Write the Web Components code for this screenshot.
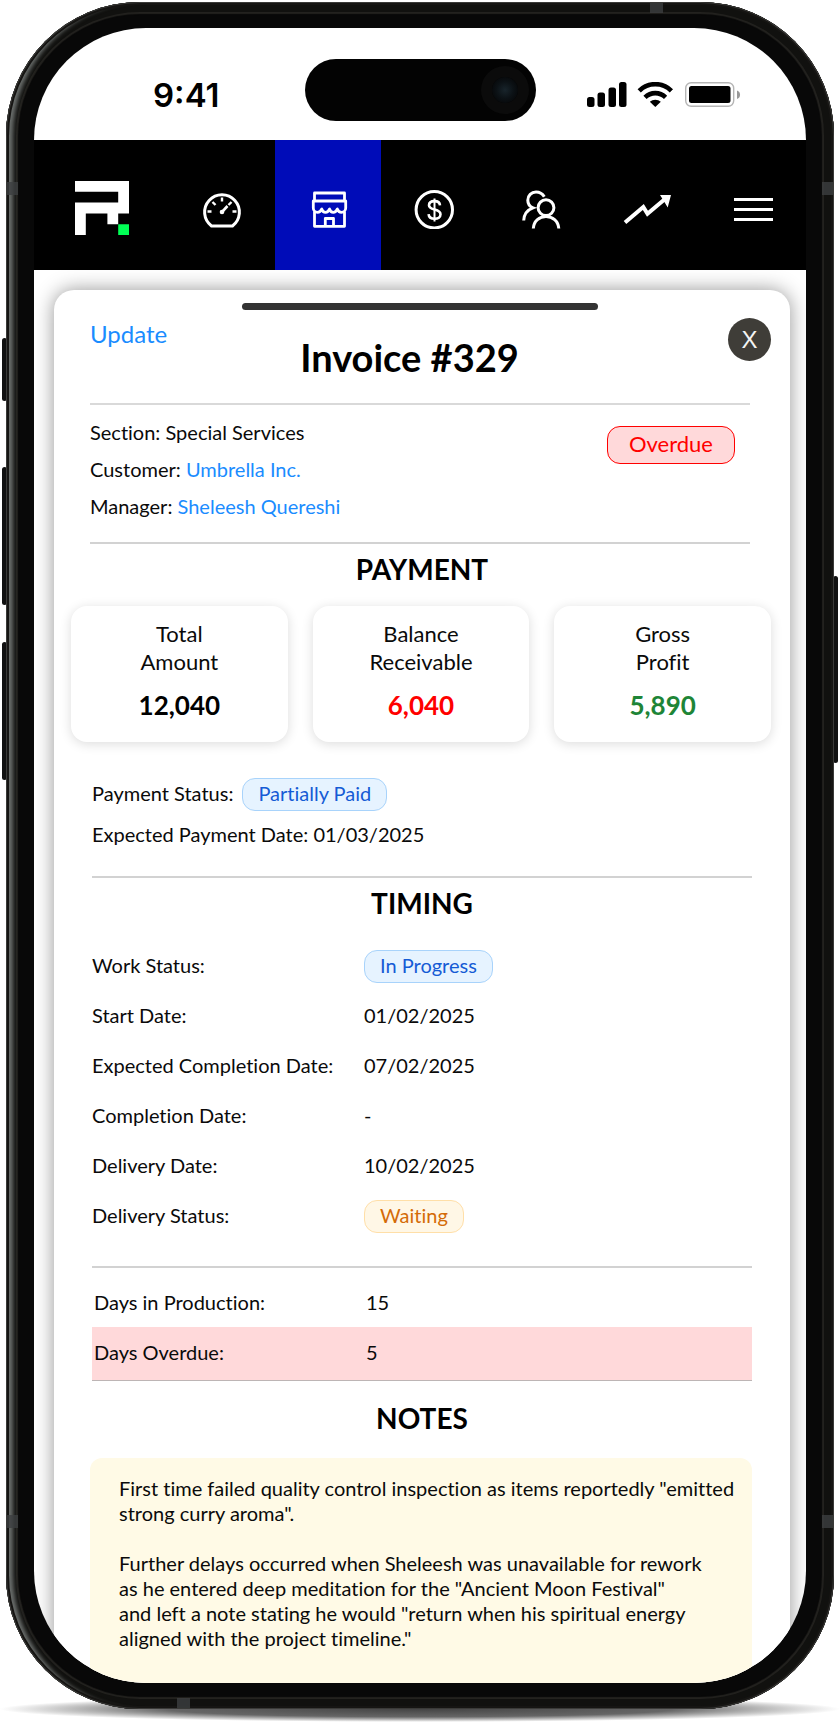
<!DOCTYPE html>
<html lang="en">
<head>
<meta charset="utf-8">
<meta name="viewport" content="width=device-width, initial-scale=1">
<title>Invoice #329</title>
<style>
  body { margin: 0; background: #fff; color: #0a0a0a; font: 20px/28px Lato, "Liberation Sans", sans-serif; font-variant-ligatures: none; }
  a { color: #1a8cff; text-decoration: none; }
</style>
</head>
<body>
<phone-frame>
  <status-bar></status-bar>
  <nav-bar>
    <nav-item label="Dashboard"><svg viewBox="0 0 48 48" width="48" height="48" fill="none" stroke="#fff" stroke-width="3"><path d="M13.5 45 A17.4 17.4 0 1 1 34.5 45 Z" stroke-linejoin="round"/><path d="M24 16.5v4M9.5 30.5h4M34.5 30.5h4M14.5 21l3 3M33.5 21l-3 3" stroke-width="2.4"/><path d="M24 31l5.5-6" stroke-width="2.6"/><circle cx="24" cy="31" r="2.3" fill="#fff" stroke="none"/></svg></nav-item>
    <nav-item label="Store" active><svg viewBox="0 0 48 48" width="48" height="48" fill="none" stroke="#fff" stroke-width="2.8" stroke-linejoin="round"><path d="M10.5 20V12h30v8M9.3 20h32.4v7c0 2.5-2 4.3-4.2 4.3-2 0-3.6-1.5-4.2-3.3-.8 2-2.200 3.300-4 3.300s-3.200-1.300-3.800-3.300c-.8 2-2.200 3.300-4 3.300s-3.200-1.300-3.800-3.300c-.8 2-2.200 3.300-4.200 3.300-2.400 0-4.200-1.800-4.200-4.300z"/><path d="M10.500 30.500V45.300h30V30.500M21.300 45.300V37.500h8.200v7.800"/></svg></nav-item>
    <nav-item label="Finance"><svg viewBox="0 0 48 48" width="48" height="48" fill="none" stroke="#fff" stroke-width="3"><circle cx="24.300" cy="28.700" r="18.200"/><path d="M30 24.300c-.2-2.700-2.500-4.200-5.500-4.200-3.200 0-5.500 1.600-5.500 4.200 0 5.600 11.500 3 11.500 9 0 2.800-2.500 4.500-5.800 4.500-3.400 0-5.900-1.700-6.100-4.700" stroke-width="2.600"/><path d="M24.500 17.500v23" stroke-width="2"/></svg></nav-item>
    <nav-item label="Customers"><svg viewBox="0 0 48 48" width="48" height="48" fill="none" stroke="#fff" stroke-width="3"><circle cx="29" cy="26.700" r="7.900"/><path d="M16.300 47.500C16.800 40 22.500 35.600 29 35.600S41.200 40 41.800 47.500M27.300 15.800C25.500 12.700 22.500 11 19 11c-4.600 0-8.200 3.600-8.200 8.200 0 3.400 1.700 6.200 5.200 7.600C10.500 28.800 7 33 6.700 39.500"/></svg></nav-item>
    <nav-item label="Reports"><svg viewBox="0 0 48 48" width="48" height="48" fill="none" stroke="#fff" stroke-width="4"><path d="M2 41.500 20.300 26l4.200 6.800L42 18"/><path d="M37 14h11l-3.300 12.500-3-5z" fill="#fff" stroke="none"/></svg></nav-item>
    <nav-item label="Menu"><svg viewBox="0 0 48 48" width="48" height="48" fill="#fff"><path d="M5 17h39v3H5zM5 27h39v3H5zM5 37h39v3H5z"/></svg></nav-item>
  </nav-bar>
  <invoice-sheet>
    <sheet-header>
      <a slot="action" href="#update">Update</a>
      Invoice #329
    </sheet-header>
    <sheet-section ruled lead>
      <party-info>
        <span>Section: Special Services</span>
        <span>Customer: <a href="#customer">Umbrella Inc.</a></span>
        <span>Manager: <a href="#manager">Sheleesh Quereshi</a></span>
        <status-pill slot="status" tone="danger" large>Overdue</status-pill>
      </party-info>
    </sheet-section>
    <sheet-section ruled heading="PAYMENT">
      <stat-row slot="wide">
        <stat-card value="12,040">Total<br>Amount</stat-card>
        <stat-card value="6,040" tone="danger">Balance<br>Receivable</stat-card>
        <stat-card value="5,890" tone="success">Gross<br>Profit</stat-card>
      </stat-row>
      <payment-info>
        <span slot="status">Payment Status:</span>
        <status-pill slot="status" tone="info">Partially Paid</status-pill>
        Expected Payment Date: 01/03/2025
      </payment-info>
    </sheet-section>
    <sheet-section ruled heading="TIMING">
      <detail-list>
        <detail-row label="Work Status:"><status-pill tone="info">In Progress</status-pill></detail-row>
        <detail-row label="Start Date:">01/02/2025</detail-row>
        <detail-row label="Expected Completion Date:">07/02/2025</detail-row>
        <detail-row label="Completion Date:">-</detail-row>
        <detail-row label="Delivery Date:">10/02/2025</detail-row>
        <detail-row label="Delivery Status:"><status-pill tone="warning">Waiting</status-pill></detail-row>
      </detail-list>
    </sheet-section>
    <sheet-section ruled>
      <detail-list compact>
        <detail-row label="Days in Production:" inset>15</detail-row>
        <detail-row label="Days Overdue:" inset alert>5</detail-row>
      </detail-list>
    </sheet-section>
    <sheet-section heading="NOTES" roomy>
      <note-box slot="wide">First time failed quality control inspection as items reportedly "emitted strong curry aroma".<br><br>Further delays occurred when Sheleesh was unavailable for rework<br>as he entered deep meditation for the "Ancient Moon Festival"<br>and left a note stating he would "return when his spiritual energy<br>aligned with the project timeline."</note-box>
    </sheet-section>
  </invoice-sheet>
</phone-frame>

<script>
const define = (name, html, setup) => {
  const template = document.createElement('template');
  template.innerHTML = html;
  customElements.define(name, class extends HTMLElement {
    constructor() {
      super();
      this.attachShadow({ mode: 'open' }).append(template.content.cloneNode(true));
    }
    connectedCallback() { if (setup) setup(this, this.shadowRoot); }
  });
};

define('phone-frame', `
<style>
  :host { display: block; position: relative; padding: 2px 6px 13px; overflow: hidden; }
  .ground { position: absolute; left: 0; right: 0; bottom: 0; height: 26px; background: radial-gradient(closest-side, #444 0, #666 60%, #bbb 82%, transparent 100%); }
  .body { position: relative; padding: 26px 28px; border-radius: 134px; background: #080808;
    box-shadow: inset 0 0 0 1px #3a3a38, inset 0 0 0 3px #161513, inset 9px 0 4px -2px #6a6e6c, inset 0 0 0 10px #11110f, inset 0 0 1px 12px #23221f; }
  .screen { overflow: hidden; border-radius: 112px; background: #fff; }
  .key { position: absolute; width: 5px; border-radius: 3px; background: #111; }
  .left { left: 2px; } .right { right: 2px; }
  .band { position: absolute; background: #3c3e40; opacity: .8; }
  .v { width: 11px; height: 13px; } .h { width: 13px; height: 10px; }
</style>
<div class="ground"></div>
<i class="key left" style="top:338px;height:63px"></i>
<i class="key left" style="top:467px;height:138px"></i>
<i class="key left" style="top:642px;height:138px"></i>
<i class="key right" style="top:576px;height:187px"></i>
<div class="body">
  <i class="band v" style="left:1px;top:180px"></i><i class="band v" style="right:1px;top:180px"></i>
  <i class="band v" style="left:1px;bottom:181px"></i><i class="band v" style="right:1px;bottom:181px"></i>
  <i class="band h" style="top:1px;right:171px"></i><i class="band h" style="bottom:1px;left:171px"></i>
  <div class="screen"><slot></slot></div>
</div>`);

define('status-bar', `
<style>
  :host { display: grid; grid-template-columns: 1fr 231px 1fr; align-items: center; height: 112px; padding-top: 0; color: #000; }
  time { padding: 22px 0 0 119px; font: 600 33px/40px Inter, sans-serif; }
  .island { height: 62px; margin-top: 12px; border-radius: 31px; background: #030303; display: flex; align-items: center; justify-content: flex-end; }
  .lens { width: 26px; height: 26px; margin-right: 18px; border-radius: 50%; background: radial-gradient(circle, #18242b 0, #0c1216 45%, #07090b 75%); box-shadow: 0 0 0 11px #0b0b0b; }
  .icons { justify-self: end; margin-right: 65px; padding-top: 22px; }
  svg { display: block; }
</style>
<time>9:41</time>
<div class="island"><span class="lens"></span></div>
<div class="icons"><svg width="154" height="26" viewBox="0 0 154 26">
  <g><rect x="0" y="15" width="7.500" height="10" rx="2.500"/><rect x="10.500" y="10.500" width="7.500" height="14.500" rx="2.500"/><rect x="21.500" y="5.500" width="7.500" height="19.500" rx="2.500"/><rect x="32" y="0" width="7.500" height="25" rx="2.500"/></g>
  <g fill="none" stroke="#000" stroke-width="4.600"><path d="M52.200 8.800a22.800 22.800 0 0 1 32.200 0"/><path d="M58 15.300a14.800 14.800 0 0 1 20.600 0"/></g>
  <path d="M62.800 19.800a8.300 8.300 0 0 1 11 0L68.300 25z"/>
  <rect x="98.700" y=".7" width="48" height="23.600" rx="5.500" fill="#fff" stroke="#b5b5b5" stroke-width="1.400"/>
  <rect x="102" y="4" width="41.500" height="17" rx="2.500"/>
  <path d="M150 8.500a4.500 4.500 0 0 1 0 8.500z" fill="#999"/>
</svg></div>`);

define('nav-bar', `
<style>
  :host { display: block; background: #000; }
  nav { display: flex; height: 130px; }
  .logo { flex: 0 0 135px; display: flex; align-items: center; justify-content: center; }
  ::slotted(*) { flex: 1; }
  svg { margin-top: 6px; }
</style>
<nav aria-label="Main">
  <a class="logo" href="#home" aria-label="Home"><svg width="54" height="54" viewBox="0 0 5 5"><path fill="#fff" d="M0 0h5v3H4v1H3V3H1v2H0V2h4V1H0z"/><path fill="#00ff55" d="M4 4h1v1H4z"/></svg></a>
  <slot></slot>
</nav>`);

define('nav-item', `
<style>
  :host { display: flex; }
  :host([active]) { background: #000cb8; }
  a { flex: 1; display: flex; align-items: center; justify-content: center; }
</style>
<a href="#"><slot></slot></a>`, (host, root) => {
  const link = root.querySelector('a');
  link.setAttribute('aria-label', host.getAttribute('label'));
  if (host.hasAttribute('active')) link.setAttribute('aria-current', 'page');
});

define('invoice-sheet', `
<style>
  :host { display: block; padding: 20px 16px 0 20px; }
  main { display: block; padding-top: 13px; border-radius: 20px 20px 0 0; background: #fff; box-shadow: 0 0 20px rgba(0, 0, 0, .42); }
  .top { padding: 0 40px 0 36px; }
  .grip { width: 54%; height: 7px; margin: 0 auto; border-radius: 4px; background: #333; }
</style>
<main><div class="top"><div class="grip"></div></div><slot></slot></main>`);

define('sheet-header', `
<style>
  :host { display: block; padding-top: 8px; }
  header { display: grid; grid-template-columns: 5fr auto 6fr; align-items: start; padding: 0 19px 0 36px; }
  ::slotted(a) { font-size: 24px; line-height: 32px; }
  h1 { margin: 17px 0 24px; font-size: 38px; line-height: 44px; font-weight: 700; color: #000; }
  button { justify-self: end; width: 43px; height: 43px; padding: 0; border: 0; border-radius: 50%; background: #3f3d38; color: #f4f4f4; font: 24px/43px "Liberation Sans", sans-serif; }
  hr { height: 2px; margin: 0 40px 0 36px; border: 0; background: #d9d9d9; }
</style>
<header><slot name="action"></slot><h1><slot></slot></h1><button type="button" aria-label="Close">X</button></header>
<hr>`);

define('sheet-section', `
<style>
  :host { display: block; --left: 38px; --right: 38px; }
  :host([lead]) { --left: 36px; --right: 40px; }
  h2 { margin: 0; padding: 7px 0 19px; text-align: center; font-size: 28px; line-height: 36px; font-weight: 700; color: #000; }
  :host([roomy]) h2 { padding: 19px 0 22px; }
  .content { padding: 0 var(--right) 0 var(--left); }
  hr { display: none; height: 2px; margin: 0 var(--right) 0 var(--left); border: 0; background: #d2d2d2; }
  :host([ruled]) hr { display: block; }
</style>
<h2></h2><slot name="wide"></slot><div class="content"><slot></slot></div><hr>`, (host, root) => {
  const title = root.querySelector('h2');
  if (host.hasAttribute('heading')) title.textContent = host.getAttribute('heading');
  else title.remove();
  if (host.querySelector('[alert]')) root.querySelector('hr').style.cssText = 'height:1px;background:#bdb5b5';
});

define('party-info', `
<style>
  :host { display: flex; justify-content: space-between; align-items: flex-start; padding: 9px 15px 17px 0; line-height: 37px; }
  .lines { display: flex; flex-direction: column; }
  .status { padding-top: 12px; }
</style>
<div class="lines"><slot></slot></div><div class="status"><slot name="status"></slot></div>`);

define('status-pill', `
<style>
  :host { display: inline-block; padding: 0 15px 3px; border: 1px solid; border-radius: 13px; font-size: 20px; line-height: 28px; }
  :host([large]) { padding: 0 21px 3px; font-size: 22px; line-height: 33px; }
  :host([tone=info]) { color: #155bd5; background: #e6f3ff; border-color: #a8d3fb; }
  :host([tone=warning]) { color: #d46b08; background: #fff7e6; border-color: #ffdfa8; }
  :host([tone=danger]) { color: #f00; background: #ffd9da; border-color: #f00; }
</style>
<slot></slot>`);

define('stat-row', `
<style>:host { display: grid; grid-template-columns: repeat(3, 1fr); gap: 25px; margin: 0 19px 0 17px; }</style>
<slot></slot>`);

define('stat-card', `
<style>
  :host { display: block; padding: 14px 0 21px; border-radius: 16px; background: #fff; text-align: center; font-size: 22px; box-shadow: 0 2px 12px rgba(0, 0, 0, .14); }
  strong { display: block; margin-top: 13px; font-size: 26px; line-height: 32px; color: #000; }
  :host([tone=danger]) strong { color: #f00; }
  :host([tone=success]) strong { color: #1e8537; }
</style>
<slot></slot><strong></strong>`, (host, root) => {
  root.querySelector('strong').textContent = host.getAttribute('value');
});

define('payment-info', `
<style>
  :host { display: block; padding: 36px 0 23px; line-height: 37px; }
  .status { display: flex; align-items: baseline; gap: 9px; margin-bottom: 5px; line-height: 28px; }
</style>
<div class="status"><slot name="status"></slot></div><slot></slot>`);

define('detail-list', `
<style>
  :host { display: block; padding-bottom: 26px; }
  :host([compact]) { padding: 9px 0 0; }
</style>
<slot></slot>`);

define('detail-row', `
<style>
  :host { display: grid; grid-template-columns: 272px 1fr; height: 50px; line-height: 50px; }
  :host([inset]) { padding-left: 2px; }
  :host([alert]) { padding-bottom: 3px; background: #ffd9da; }
</style>
<span id="label"></span><span aria-labelledby="label"><slot></slot></span>`, (host, root) => {
  root.querySelector('#label').textContent = host.getAttribute('label');
});

define('note-box', `
<style>:host { display: block; margin: 0 38px 0 36px; padding: 18px 13px 32px 29px; border-radius: 12px 12px 0 0; background: #fffae6; line-height: 25px; }</style>
<slot></slot>`);
</script>
</body>
</html>
